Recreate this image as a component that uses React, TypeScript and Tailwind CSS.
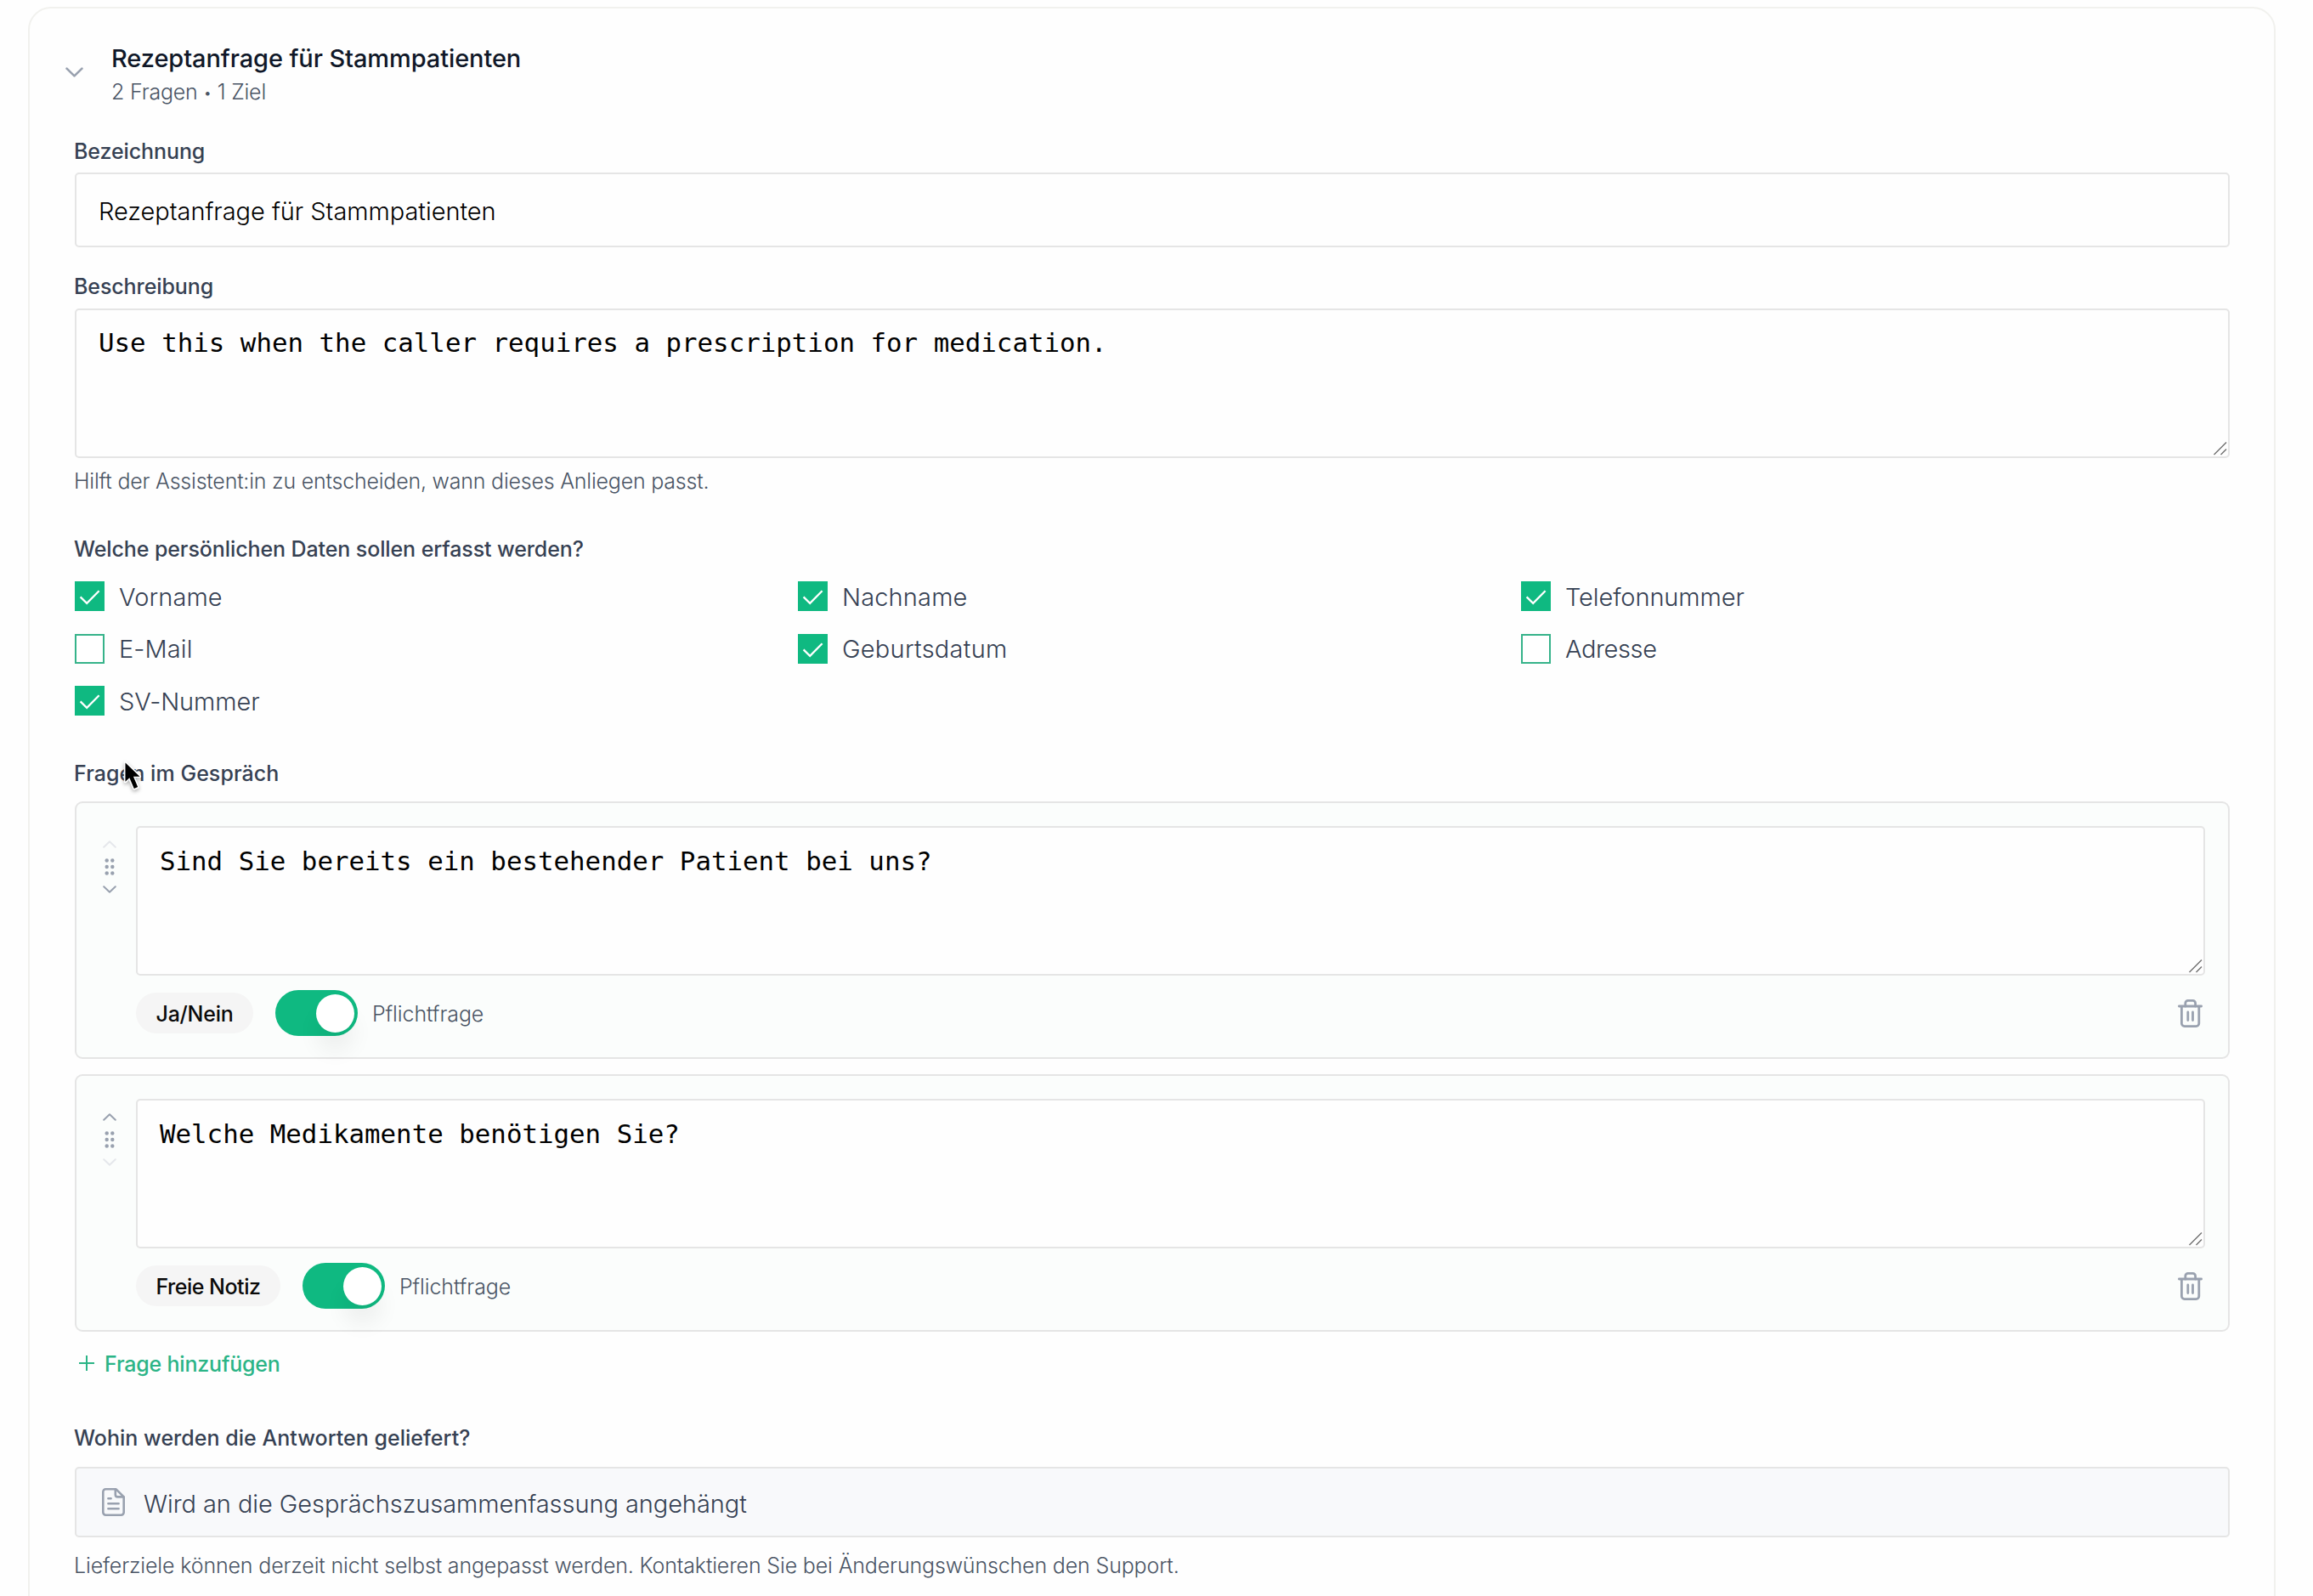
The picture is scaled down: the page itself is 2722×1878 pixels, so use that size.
import clsx from 'clsx';

const personalFields = [
  { label: 'Vorname', checked: true, tracking: 'tracking-[0.1px]' },
  { label: 'Nachname', checked: true, tracking: 'tracking-[0.15px]' },
  { label: 'Telefonnummer', checked: true, tracking: 'tracking-[-0.1px]' },
  { label: 'E-Mail', checked: false, tracking: 'tracking-[0.1px]' },
  { label: 'Geburtsdatum', checked: true, tracking: 'tracking-[0.25px]' },
  { label: 'Adresse', checked: false, tracking: 'tracking-[-0.4px]' },
  { label: 'SV-Nummer', checked: true, tracking: 'tracking-[-0.1px]' },
];

const questions = [
  { text: 'Sind Sie bereits ein bestehender Patient bei uns?', type: 'Ja/Nein', tracking: 'tracking-[-0.25px]' },
  { text: 'Welche Medikamente benötigen Sie?', type: 'Freie Notiz', tracking: 'tracking-[-0.5px]' },
];

function Chevron({ up, className }: { up?: boolean; className?: string }) {
  return (
    <svg viewBox="0 0 16 9" fill="none" stroke="currentColor" strokeLinecap="round" strokeLinejoin="round" className={className}>
      <path d={up ? 'M1.2 7.8 8 1.2l6.8 6.6' : 'M1.2 1.2 8 7.8l6.8-6.6'} strokeWidth="2" />
    </svg>
  );
}

function GripIcon() {
  return (
    <svg viewBox="0 0 12 20" className="h-5 w-3 fill-gray-400">
      {[2.5, 10, 17.5].map((y) => (
        <g key={y}>
          <circle cx="2.7" cy={y} r="2.2" />
          <circle cx="9.3" cy={y} r="2.2" />
        </g>
      ))}
    </svg>
  );
}

function TrashIcon() {
  return (
    <svg
      viewBox="0 0 29 33"
      fill="none"
      stroke="currentColor"
      strokeWidth="2.8"
      strokeLinecap="round"
      strokeLinejoin="round"
      className="h-[33px] w-[29px]"
    >
      <path d="M1.4 8h26.2M4.4 8v20.2a3.4 3.4 0 0 0 3.4 3.4h13.6a3.4 3.4 0 0 0 3.4-3.4V8" />
      <path d="M8.8 8V4.4a3 3 0 0 1 3-3h5.8a3 3 0 0 1 3 3V8M11.8 15v9.6M17.5 15v9.6" />
    </svg>
  );
}

function DocumentIcon() {
  return (
    <svg
      viewBox="0 0 27 33"
      fill="none"
      stroke="currentColor"
      strokeWidth="2.6"
      strokeLinecap="round"
      strokeLinejoin="round"
      className="h-[33px] w-[27px]"
    >
      <path d="M16.6 1.3H4.4a3.1 3.1 0 0 0-3.1 3.1v24.2a3.1 3.1 0 0 0 3.1 3.1h18.2a3.1 3.1 0 0 0 3.1-3.1V10.4z" />
      <path d="M15.8 1.6v6.2a2.6 2.6 0 0 0 2.6 2.6h7M7.4 12.2h3.2M7.4 18.2h12.2M7.4 24.2h12.2" />
    </svg>
  );
}

function Label({ children, className }: { children: string; className?: string }) {
  return <div className={clsx('-ml-px text-[25px] leading-8 font-medium text-gray-700', className)}>{children}</div>;
}

function TextArea({ value, className }: { value: string; className?: string }) {
  return (
    <div
      className={clsx(
        'relative rounded-[5px] border-2 border-[#e5e5e5] bg-[#fefefe] px-[26px] font-["DejaVu_Sans_Mono",monospace] text-[30.8px] leading-10 text-black',
        className,
      )}
    >
      {value}
      <svg viewBox="0 0 16 16" className="absolute right-px bottom-px size-4 stroke-[#6f6f6f]" strokeWidth="1.4">
        <path d="M.5 15 15 .5M8.5 15 15 8.5" />
      </svg>
    </div>
  );
}

function Checkbox({ label, checked, tracking }: { label: string; checked: boolean; tracking: string }) {
  return (
    <div className="flex h-[35.5px] items-center gap-[17px]">
      <div className={clsx('size-[35px] border-2', checked ? 'border-[#0fb981] bg-[#0fb981]' : 'border-[#36b38a] bg-white')}>
        {checked && (
          <svg viewBox="2 2 31 31" fill="none" className="size-[31px] stroke-white" strokeWidth="2.3">
            <path d="m6.6 18.4 7.6 7.4L28.6 11.2" />
          </svg>
        )}
      </div>
      <span className={clsx('pt-[2px] text-[29px] leading-9 font-light text-gray-700', tracking)}>{label}</span>
    </div>
  );
}

function Toggle() {
  return (
    <div className="flex h-[54px] w-[97px] items-center justify-end rounded-full bg-[#0fb981] pr-1">
      <div className="size-[45px] rounded-full bg-white shadow-[0_22px_26px_rgba(0,0,0,0.06)]" />
    </div>
  );
}

type QuestionProps = { text: string; type: string; tracking: string; first: boolean; last: boolean };

function QuestionCard({ text, type, tracking, first, last }: QuestionProps) {
  return (
    <div className="flex h-[303px] gap-[17px] rounded-[9px] border-2 border-[#e5e5e5] bg-[#fbfdfc] p-[27px] pb-0">
      <div className="flex w-[26px] flex-col items-center gap-3 pt-[17px] pr-[2px]">
        <Chevron up className={clsx('h-[9px] w-4', first ? 'text-gray-200' : 'text-gray-400')} />
        <GripIcon />
        <Chevron className={clsx('h-[9px] w-4', last ? 'text-gray-200' : 'text-gray-400')} />
      </div>
      <div className="flex-1">
        <TextArea value={text} className="h-[176px] pt-[19px]" />
        <div className="mt-[17px] flex h-[54px] items-center">
          <div className={clsx('flex h-12 items-center rounded-full bg-[#f5f5f5] px-[23.5px] pt-[3px] text-[25px] font-medium text-neutral-950', tracking)}>
            {type}
          </div>
          <div className="ml-[26px]">
            <Toggle />
          </div>
          <span className="ml-[17px] pt-[3px] text-[25px] font-light tracking-[-0.1px] text-gray-600">Pflichtfrage</span>
          <div className="mr-[3px] ml-auto text-gray-400">
            <TrashIcon />
          </div>
        </div>
      </div>
    </div>
  );
}

export default function App() {
  return (
    <div className="relative h-[1878px] w-[2722px] overflow-hidden bg-[#fefefe] px-[33px] pt-2 pr-11 font-['Inter',sans-serif]">
      <div className="h-[1940px] rounded-[27px] border-2 border-[#f1f1ee] px-[53px] pt-10 pr-[52px]">
        <div className="-ml-[11px] flex h-[77px] items-start gap-[33px]">
          <Chevron className="mt-[29px] h-[12px] w-[21px] text-gray-400" />
          <div>
            <div className="pt-px text-[29px] leading-9 font-medium tracking-[-0.1px] text-gray-900">Rezeptanfrage für Stammpatienten</div>
            <div className="mt-[3px] text-[25px] leading-9 font-light tracking-[-0.2px] text-gray-600">
              2 Fragen <span className="align-[2px] text-[17px]">•</span> 1 Ziel
            </div>
          </div>
        </div>

        <Label className="mt-[35px] tracking-[-0.1px]">Bezeichnung</Label>
        <div className="mt-[9px] flex h-[88px] items-center rounded-[5px] border-2 border-[#e5e5e5] px-[26px] pt-[3px] text-[29px] font-light tracking-[-0.05px] text-black">
          Rezeptanfrage für Stammpatienten
        </div>

        <Label className="mt-[30px] tracking-[-0.1px]">Beschreibung</Label>
        <TextArea value="Use this when the caller requires a prescription for medication." className="mt-[10px] h-[176px] pt-[18px]" />
        <p className="mt-[11px] -ml-px text-[25px] leading-8 font-light tracking-[-0.22px] text-gray-600">
          Hilft der Assistent:in zu entscheiden, wann dieses Anliegen passt.
        </p>

        <Label className="mt-12 tracking-[-0.1px]">Welche persönlichen Daten sollen erfasst werden?</Label>
        <div className="mt-[22px] grid grid-cols-3 gap-x-[17px] gap-y-[26px]">
          {personalFields.map((field) => (
            <Checkbox key={field.label} {...field} />
          ))}
        </div>

        <Label className="mt-[51.5px] tracking-[0.05px]">Fragen im Gespräch</Label>
        <div className="mt-[17px] flex flex-col gap-[18px]">
          {questions.map((question, index) => (
            <QuestionCard key={question.type} {...question} first={index === 0} last={index === questions.length - 1} />
          ))}
        </div>
        <div className="mt-[22px] ml-[5px] flex items-center gap-3 text-[#2bb486]">
          <svg viewBox="0 0 18 18" className="mb-[3px] size-[18px]" stroke="currentColor" strokeWidth="2">
            <path d="M9 0v18M0 9h18" />
          </svg>
          <span className="text-[25px] leading-8 font-medium tracking-[-0.2px]">Frage hinzufügen</span>
        </div>

        <Label className="mt-[55px] tracking-[0.02px]">Wohin werden die Antworten geliefert?</Label>
        <div className="mt-[18px] flex h-[83px] items-center gap-[22px] rounded-[5px] border-2 border-[#e5e5e5] bg-[#f8f9fb] pl-[30px] text-gray-400">
          <DocumentIcon />
          <span className="pt-[4px] text-[29px] font-light tracking-[-0.07px] text-gray-700">Wird an die Gesprächszusammenfassung angehängt</span>
        </div>
        <p className="mt-[17px] -ml-px text-[25px] leading-8 font-light tracking-[-0.16px] text-gray-600">
          Lieferziele können derzeit nicht selbst angepasst werden. Kontaktieren Sie bei Änderungswünschen den Support.
        </p>
      </div>

      {/* mouse pointer */}
      <svg viewBox="-3 -4 24 36" className="absolute top-[893px] left-[144px] h-[40px] w-[27px] drop-shadow-[0_2px_2px_rgba(0,0,0,0.3)]">
        <path
          d="M0 0v20l4.4-4 4.9 11.4 3.9-1.6-4.7-11.2h6.8z"
          fill="black"
          stroke="white"
          strokeWidth="3"
          strokeLinejoin="round"
          paintOrder="stroke"
        />
      </svg>
    </div>
  );
}
